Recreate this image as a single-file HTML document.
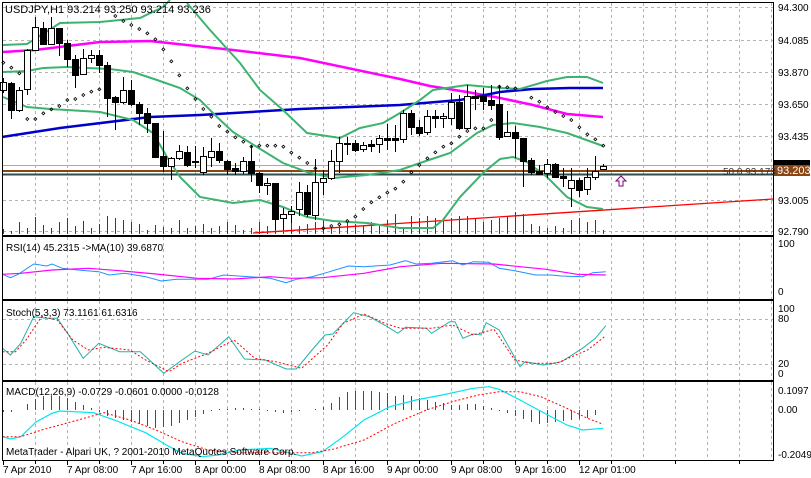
<!DOCTYPE html>
<html><head><meta charset="utf-8"><style>
html,body{margin:0;padding:0;background:#fff;width:811px;height:478px;overflow:hidden}
svg{display:block;font-family:"Liberation Sans",sans-serif}
</style></head><body>
<svg id="s" width="811" height="478" viewBox="0 0 811 478" xmlns="http://www.w3.org/2000/svg" shape-rendering="crispEdges">
<rect width="811" height="478" fill="#fff"/>
<g id="grid" stroke="#b4b4b4" stroke-dasharray="3,3" stroke-width="1"></g>
<g id="g"></g>
<g id="frame" fill="none" stroke="#000">
<rect x="2.5" y="2.5" width="771" height="458"/>
<line x1="2" y1="236" x2="774" y2="236" stroke-width="2"/>
<line x1="2" y1="300" x2="774" y2="300" stroke-width="2"/>
<line x1="2" y1="381" x2="774" y2="381" stroke-width="2"/>
</g>
<g font-size="11" fill="#000">
<text x="5" y="13">USDJPY,H1  93.214 93.250 93.214 93.236</text>
<text x="6" y="251" font-size="10">RSI(14) 45.2315  -&gt;MA(10) 39.6870</text>
<text x="6" y="316" font-size="10">Stoch(5,3,3) 73.1161 61.6316</text>
<text x="6" y="395" font-size="10">MACD(12,26,9) -0.0729 -0.0601 0.0000 -0.0128</text>
<text x="6" y="455" font-size="10">MetaTrader - Alpari UK, ? 2001-2010 MetaQuotes Software Corp.</text>
<g font-size="10">
<text x="778" y="11">94.300</text><text x="778" y="44">94.085</text><text x="778" y="76">93.870</text>
<text x="778" y="108">93.650</text><text x="778" y="140">93.435</text><text x="778" y="204">93.005</text><text x="778" y="235">92.790</text>
<text x="778" y="247">100</text><text x="778" y="295">0</text>
<text x="778" y="312">100</text><text x="778" y="322">80</text><text x="778" y="367">20</text><text x="778" y="377">0</text>
<text x="778" y="394">0.1097</text><text x="778" y="413">0.00</text><text x="778" y="458">-0.2049</text>
</g>
<rect x="774" y="160" width="36" height="6" fill="#000"/>
<rect x="774" y="165" width="36" height="11" fill="#8b4513"/>
<text x="777" y="174" fill="#fff" font-size="11">93.203</text>
<text x="723" y="175" font-size="10" fill="#333">50.0 93.173</text>
<g font-size="10" id="tl"></g>
</g>
<path d="M619 186 v-5 h-3 l5,-5 l5,5 h-3 v5 z" fill="#fff" stroke="#800080" shape-rendering="auto"/>
</svg>
<script>
var NS="http://www.w3.org/2000/svg",g=document.getElementById('g'),gr=document.getElementById('grid');
function el(p,t,a){var e=document.createElementNS(NS,t);for(var k in a)e.setAttribute(k,a[k]);p.appendChild(e);return e;}
for(var x=35;x<772;x+=32){[[3,235],[237,299],[301,380],[382,460]].forEach(function(r){el(gr,'line',{x1:x+.5,y1:r[0],x2:x+.5,y2:r[1]});});}
[7,40,72,104,136,200,231].forEach(function(y){el(gr,'line',{x1:3,y1:y+.5,x2:773,y2:y+.5});});
[319,364].forEach(function(y){el(gr,'line',{x1:3,y1:y+.5,x2:773,y2:y+.5});});
var tl=document.getElementById('tl');
var labs=["7 Apr 2010","7 Apr 08:00","7 Apr 16:00","8 Apr 00:00","8 Apr 08:00","8 Apr 16:00","9 Apr 00:00","9 Apr 08:00","9 Apr 16:00","12 Apr 01:00"];
labs.forEach(function(l,i){var x=3+64*i;el(tl,'text',{x:x,y:473}).textContent=l;el(g,'line',{x1:x+.5,y1:461,x2:x+.5,y2:465,stroke:'#000'});});
for(var x=35;x<772;x+=64)el(g,'line',{x1:x+.5,y1:461,x2:x+.5,y2:464,stroke:'#000'});
el(g,'line',{x1:3,y1:165.5,x2:773,y2:165.5,stroke:'#aaa'});
el(g,'line',{x1:3,y1:171,x2:773,y2:171,stroke:'#8b4513','stroke-width':2});
el(g,'line',{x1:3,y1:174.5,x2:773,y2:174.5,stroke:'#2f4f4f','stroke-width':2});
var vh=[5,3,12,6,17,9,6,12,16,8,13,6,10,18,16,14,12,10,4,9,7,6,14,6,8,10,6,8,12,9,4,6,12,8,16,6,14,8,10,12,14,6,8,12,10,8,12,8,14,20,7,18,16,18,16,14,16,18,18,16,12,14,16,18,22,20,10,8,6,8,6,14,16,12,14,4];
vh.forEach(function(h,i){var x=3.5+8*i;el(g,'line',{x1:x,y1:234,x2:x,y2:234-h,stroke:'#006400'});});
function pl(pts,c,w,dash,sx,sy,oy){var s=pts.map(function(p){return (p[0]/sx).toFixed(1)+','+(p[1]/sy+oy).toFixed(1)}).join(' ');var a={points:s,fill:'none',stroke:c,'stroke-width':w||1,'shape-rendering':'auto'};if(dash)a['stroke-dasharray']=dash;el(g,'polyline',a);}
pl([[253,233],[773,199]],'#f00',1.3,0,1,1,0);
pl([[3,52],[35,50],[100,42],[150,41],[233,50],[300,58],[400,79],[430,86],[467,92],[500,98],[533,105],[567,114],[603,117]],'#f0f',2.5,0,1,1,0);
pl([[2,137],[60,128],[150,117],[200,115],[300,109],[400,105],[460,100],[500,92],[533,89],[570,88],[603,88]],'#00c',2.5,0,1,1,0);
var bb='#3cb371';
pl([[3,45],[27,44],[60,23],[100,22],[140,18],[163,7],[170,0]],bb,2,0,1,1,0);
pl([[187,3],[210,30],[240,63],[260,90],[283,110],[307,133],[340,138],[360,128],[383,123],[400,113],[420,100],[433,90],[467,85],[500,88],[520,89],[547,81],[567,77],[587,77],[603,83]],bb,2,0,1,1,0);
pl([[3,72],[27,71],[43,68],[67,67],[87,68],[110,69],[133,72],[157,80],[180,88],[200,100],[217,117],[233,132],[257,147],[283,163],[307,172],[333,178],[367,175],[400,170],[420,163],[450,153],[477,133],[493,125],[513,123],[540,127],[567,133],[603,146]],bb,2,0,1,1,0);
pl([[3,97],[27,107],[50,109],[100,112],[133,120],[153,133],[167,157],[180,177],[200,197],[233,203],[260,200],[283,207],[307,217],[333,221],[367,223],[400,228],[433,228],[443,220],[460,197],[483,173],[500,159],[513,157],[527,162],[547,177],[567,197],[587,207],[603,209]],bb,2,0,1,1,0);
var sar=[[10,188],[34,203],[58,220],[82,357],[106,357],[130,340],[154,328],[178,318],[202,300],[226,297],[250,285],[274,275],[298,268],[346,48],[370,63],[394,75],[418,87],[442,100],[466,118],[490,148],[514,184],[538,226],[562,265],[586,297],[610,327],[634,350],[658,378],[682,395],[706,412],[730,425],[754,440],[778,437],[802,437],[826,437],[850,440],[874,458],[898,473],[922,489],[946,505],[970,685],[994,678],[1018,673],[1042,663],[1066,650],[1090,627],[1114,607],[1138,592],[1162,578],[1186,566]];
var sar2=[[10,545],[34,517],[58,495],[82,475],[106,457],[130,440],[154,430],[178,410],[202,393],[226,385],[250,385],[274,360],[298,260],[322,262],[346,265],[394,293],[418,305],[442,322],[466,336],[490,348],[514,360],[538,382],[562,403],[586,418],[610,437]];
function dot(x,y){el(g,'path',{d:'M'+x+','+(y-1.5)+'l1.5,1.5l-1.5,1.5l-1.5,-1.5z',fill:'none',stroke:'#000','stroke-width':.8,'shape-rendering':'auto'});}
sar.forEach(function(p){dot(p[0]/3,p[1]/3)});sar2.forEach(function(p){dot(p[0]/3+400,p[1]/3)});
var C=[[82,90,78,93,1],[83,110,82,119,0],[90,110,87,112,1],[50,89,49,95,1],[27,50,17,51,1],[28,44,22,45,0],[28,44,17,45,1],[28,43,28,56,0],[43,59,40,67,0],[59,75,55,88,0],[58,74,49,75,1],[55,58,50,63,1],[55,65,50,73,0],[65,98,62,117,0],[97,102,96,130,0],[90,102,77,104,1],[90,104,80,106,0],[104,113,102,125,0],[113,123,108,133,0],[123,157,123,158,0],[156,166,131,172,0],[158,166,157,180,1],[151,158,145,160,1],[152,165,146,167,0],[161,162,146,168,0],[156,172,147,175,1],[151,157,138,167,1],[151,160,143,163,0],[161,169,160,175,0],[168,171,163,175,0],[161,171,157,174,1],[161,173,145,182,0],[173,185,172,193,0],[183,185,178,195,1],[183,219,183,230,0],[214,218,208,230,1],[211,214,206,223,1],[192,209,182,216,1],[192,214,185,217,0],[182,215,159,220,1],[178,182,170,195,1],[161,178,150,180,1],[143,161,137,173,1],[143,144,137,155,0],[143,150,140,152,0],[145,149,142,152,1],[144,146,140,152,0],[138,144,135,153,1],[138,140,124,150,0],[138,140,125,152,0],[113,139,110,143,1],[113,127,110,135,0],[127,133,120,136,0],[116,132,110,135,1],[116,118,110,128,0],[116,118,113,128,1],[102,118,93,125,1],[102,128,95,130,0],[96,128,85,130,1],[96,98,90,110,0],[96,101,88,110,0],[100,105,85,110,0],[104,137,85,140,0],[132,136,111,137,1],[132,138,126,158,0],[138,161,138,187,0],[160,172,158,175,0],[171,174,165,175,0],[164,173,159,178,1],[164,177,163,178,0],[176,178,168,187,0],[180,188,168,207,1],[180,190,178,197,0],[177,189,168,195,1],[171,177,156,180,1],[166,169,164,170,1]];
C.forEach(function(c,i){var x=3.5+8*i;el(g,'line',{x1:x,y1:c[2],x2:x,y2:c[3],stroke:'#000'});var h=Math.max(1,c[1]-c[0]);el(g,'rect',{x:x-3,y:c[0]+.5,width:6,height:h,fill:c[4]?'#fff':'#000',stroke:'#000'});});
var X=1.923;
pl([[5,103],[20,113],[35,103],[65,72],[90,78],[100,72],[120,85],[150,90],[190,95],[210,105],[240,100],[280,110],[310,123],[340,118],[400,118],[430,105],[480,110],[520,115],[550,128],[570,118],[600,110],[630,97],[670,78],[700,80],[750,75],[780,62],[800,72],[830,70],[870,62],[890,75],[910,65],[940,67],[960,85],[990,92],[1030,105],[1060,105],[1080,108],[1120,110],[1140,98],[1165,95]],'#1e90ff',1,0,X,3,240);
pl([[5,103],[40,100],[100,90],[170,85],[230,92],[300,102],[380,115],[450,117],[520,110],[560,115],[620,113],[700,100],[770,80],[850,70],[950,72],[1050,88],[1110,103],[1165,105]],'#f0f',1.2,0,X,3,240);
pl([[5,325],[20,345],[40,310],[65,230],[90,235],[110,235],[130,280],[160,355],[190,310],[230,335],[270,335],[315,400],[350,360],[375,333],[400,345],[440,290],[470,357],[510,360],[550,387],[570,387],[600,330],[625,285],[640,282],[680,218],[710,230],[745,260],[765,280],[780,262],[820,265],[830,280],[865,245],[875,245],[890,295],[910,282],[925,285],[935,248],[960,270],[1000,380],[1010,365],[1045,375],[1080,365],[1120,325],[1145,295],[1165,257]],'#20b2aa',1,0,X,3,240);
pl([[5,335],[30,335],[50,300],[80,230],[110,240],[140,300],[170,330],[200,322],[250,330],[280,360],[325,395],[350,370],[400,340],[450,300],[490,355],[530,365],[580,385],[630,315],[660,250],[700,222],[740,250],[770,265],[830,265],[870,255],[910,285],[950,268],[990,360],[1020,370],[1070,370],[1130,330],[1165,287]],'#f00',1,'2,2',X,3,240);
var hv=[-2,-2,0,6,11,14,14,14,12,8,5,2,-2,-6,-8,-10,-12,-14,-16,-18,-17,-16,-13,-10,-7,-4,-1,1,1,2,2,1,1,-1,-2,-3,-2,-1,0,1,3,7,13,18,19,19,19,18,17,14,15,14,12,10,8,7,5,5,6,6,4,2,-1,-3,-6,-9,-12,-14,-13,-12,-11,-10,-9,-8,-5];
hv.forEach(function(v,i){var x=3.5+8*i;if(v)el(g,'line',{x1:x,y1:410,x2:x,y2:410-v,stroke:v>0?'#008000':'#ff0000'});});
pl([[5,590],[20,597],[40,590],[70,545],[100,520],[115,513],[180,518],[220,540],[280,578],[320,615],[350,640],[390,650],[420,645],[460,630],[520,625],[560,640],[580,648],[620,635],[660,590],[700,540],[750,500],[800,480],[850,465],[880,455],[910,445],[940,440],[960,448],[1000,480],[1050,522],[1090,555],[1120,570],[1160,565]],'#00e5ee',1.2,0,X,3,240);
pl([[5,590],[40,590],[80,570],[150,540],[200,518],[250,540],[300,570],[350,605],[400,630],[460,638],[530,638],[600,638],[640,628],[700,600],[760,550],[820,510],[870,485],[920,465],[960,455],[1000,455],[1040,470],[1090,505],[1130,535],[1160,553]],'#f00',1,'2,2',X,3,240);
</script>
</body></html>
